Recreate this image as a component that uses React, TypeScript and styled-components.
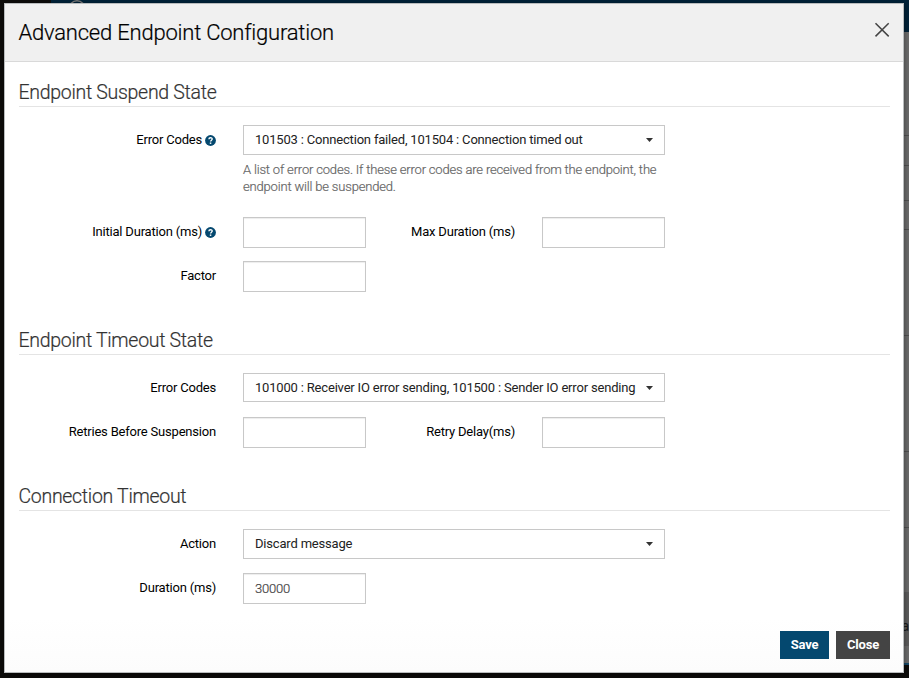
import React from "react";
import styled, { createGlobalStyle } from "styled-components";

const GlobalStyle = createGlobalStyle`
  *, *::before, *::after { box-sizing: border-box; }
  html, body { margin: 0; padding: 0; overflow: hidden; }
  body { font-family: Roboto, "Liberation Sans", sans-serif; font-size: 13px; color: #000; }
`;

const Page = styled.div`
  position: relative;
  width: 909px;
  height: 678px;
  overflow: hidden;
  display: flex;
  flex-direction: column;
  background: #0d0c0a;
`;

const TopBar = styled.div`
  display: flex;
  flex: none;
  height: 32px;
  padding-left: 17px;
  margin-left: 51px;
  background: #002238;
`;

const LogoRing = styled.svg`
  display: block;
  width: 18px;
  height: 18px;
`;

const PageBody = styled.div`
  display: flex;
  flex-direction: column;
  align-self: flex-end;
  width: 60px;
  height: 633px;
  background: #6c6c6c;
  border-bottom: 2px solid #164867;
`;

const Stripe = styled.div<{ $height: number }>`
  flex: none;
  height: ${(p) => p.$height}px;
  border-bottom: 1px solid #505050;
`;

const PageFooterRow = styled.div`
  display: flex;
  align-items: center;
  justify-content: flex-end;
  height: 54px;
  margin-top: 64px;
  padding-top: 13px;
  background: #5c5c5c;
  color: #191919;
  font-size: 14px;
`;

const Modal = styled.section`
  position: absolute;
  left: 4px;
  top: 3px;
  width: 900px;
  height: 670px;
  display: flex;
  flex-direction: column;
  border: 1px solid #b9bcbd;
  background: #fff;
  box-shadow: 0 2px 6px rgba(0, 0, 0, 0.45);
`;

const ModalHeader = styled.header`
  display: flex;
  justify-content: space-between;
  flex: none;
  height: 58px;
  padding: 0 13px;
  background: #f0f0f0;
  border-bottom: 1px solid #d9d9d9;
`;

const Title = styled.h1`
  margin: 0;
  padding-left: 0.5px;
  font-size: 22px;
  line-height: 57px;
  font-weight: 300;
  letter-spacing: -0.21px;
  -webkit-text-stroke: 0.2px #000;
  white-space: nowrap;
`;

const CloseIcon = styled.svg`
  width: 16px;
  height: 16px;
  margin-top: 18px;
`;

const ModalBody = styled.div`
  flex: 1;
  padding: 0 13px 0 14px;
`;

const Section = styled.section<{ $height: number }>`
  height: ${(p) => p.$height}px;
`;

const SectionTitle = styled.h2`
  margin: 0 0 18px;
  height: 45px;
  padding-top: 19px;
  border-bottom: 1px solid #e4e4e4;
  color: #333;
  font-size: 19.5px;
  line-height: 24px;
  font-weight: 300;
  letter-spacing: -0.3px;
  text-indent: -0.5px;
  -webkit-text-stroke: 0.2px #333;
  white-space: nowrap;
`;

const SelectLine = styled.div<{ $height?: number }>`
  display: grid;
  grid-template-columns: 197px 422px;
  column-gap: 27px;
  height: ${(p) => p.$height ?? 44}px;
`;

const InputLine = styled.div`
  display: grid;
  grid-template-columns: 197px 150px 149px 150px;
  height: 44px;
`;

const Label = styled.label`
  display: flex;
  justify-content: flex-end;
  align-items: center;
  gap: 3px;
  height: 28px;
  letter-spacing: -0.2px;
  white-space: nowrap;
`;

const InputCell = styled.div`
  padding-left: 27px;
`;

const Select = styled.div<{ $height?: number }>`
  display: flex;
  align-items: center;
  justify-content: space-between;
  height: ${(p) => p.$height ?? 30}px;
  padding: 0 11px;
  border: 1px solid #c8c8c8;
  background: #fff;
  color: #222;
  letter-spacing: -0.185px;
  white-space: nowrap;
`;

const SelectText = styled.span`
  line-height: 15px;
  padding-bottom: 1px;
`;

const Caret = styled.svg<{ $offset: number }>`
  flex: none;
  width: 7px;
  height: 4px;
  margin-top: ${(p) => p.$offset}px;
`;

const Input = styled.input`
  display: block;
  width: 123px;
  height: 31px;
  padding: 0 11px 1px;
  border: 1px solid #c8c8c8;
  border-radius: 0;
  outline: none;
  background: #fff;
  box-shadow: inset 0 1px 1px rgba(0, 0, 0, 0.075);
  color: #444;
  font: 300 13px Roboto, sans-serif;
  letter-spacing: -0.2px;
  -webkit-text-stroke: 0.2px #444;
`;

const Help = styled.p`
  margin: 6px 0 0;
  color: #666;
  font-weight: 300;
  line-height: 17px;
  letter-spacing: -0.175px;
  -webkit-text-stroke: 0.2px #666;
`;

const HelpMark = styled.svg`
  flex: none;
  width: 11px;
  height: 11px;
  margin-top: 2px;
`;

const ModalFooter = styled.footer`
  display: flex;
  justify-content: flex-end;
  gap: 7px;
  height: 55px;
  padding: 14px 13px 0;
  background: linear-gradient(#fff, #fcfcfc);
`;

const Button = styled.button<{ $primary?: boolean }>`
  width: ${(p) => (p.$primary ? 49 : 54)}px;
  height: 28px;
  padding: 0 0 2px;
  border: 0;
  background: ${(p) => (p.$primary ? "#04486f" : "#444")};
  color: #fff;
  font: 700 13px Roboto, sans-serif;
  letter-spacing: -0.2px;
`;

const HelpIcon = () => (
  <HelpMark viewBox="0 0 11 11">
    <circle cx="5.5" cy="5.5" r="5.4" fill="#04486f" />
    <path d="M3.9 4.2c0-2 3.3-2 3.3-.1 0 1.1-1.6 1.2-1.6 2.5" fill="none" stroke="#fff" strokeWidth="1.4" />
    <rect x="4.8" y="7.5" width="1.5" height="1.4" fill="#fff" />
  </HelpMark>
);

const SelectRow = ({ label, value, help, hint, height, boxHeight = 30 }: {
  label: string; value: string; help?: boolean; hint?: string; height?: number; boxHeight?: number;
}) => (
  <SelectLine $height={height}>
    <Label>{label}{help && <HelpIcon />}</Label>
    <div>
      <Select $height={boxHeight}>
        <SelectText>{value}</SelectText>
        <Caret $offset={boxHeight % 2} viewBox="0 0 7 4"><path d="M0 0h7L3.5 4z" fill="#333" /></Caret>
      </Select>
      {hint && <Help>{hint}</Help>}
    </div>
  </SelectLine>
);

const InputRow = ({ label, value = "", help, second }: {
  label: string; value?: string; help?: boolean; second?: string;
}) => (
  <InputLine>
    <Label>{label}{help && <HelpIcon />}</Label>
    <InputCell><Input defaultValue={value} /></InputCell>
    {second && (
      <>
        <Label>{second}</Label>
        <InputCell><Input /></InputCell>
      </>
    )}
  </InputLine>
);

const stripes = [104, 30, 35, 29, 106, 116, 76];

export default function App() {
  return (
    <Page>
      <GlobalStyle />
      <TopBar>
        <LogoRing viewBox="0 0 18 18"><circle cx="9" cy="9" r="8.2" fill="none" stroke="#777" strokeWidth="1.4" /></LogoRing>
      </TopBar>
      <PageBody>
        {stripes.map((h) => <Stripe key={h} $height={h} />)}
        <PageFooterRow>a</PageFooterRow>
      </PageBody>
      <Modal>
        <ModalHeader>
          <Title>Advanced Endpoint Configuration</Title>
          <CloseIcon viewBox="0 0 16 16"><path d="M1.5 1.2l13.2 13.2M14.7 1.2l-13.2 13.2" stroke="#444" strokeWidth="1.5" /></CloseIcon>
        </ModalHeader>
        <ModalBody>
          <Section $height={248}>
            <SectionTitle>Endpoint Suspend State</SectionTitle>
            <SelectRow
              label="Error Codes"
              help
              height={92}
              value="101503 : Connection failed, 101504 : Connection timed out"
              hint="A list of error codes. If these error codes are received from the endpoint, the endpoint will be suspended."
            />
            <InputRow label="Initial Duration (ms)" help second="Max Duration (ms)" />
            <InputRow label="Factor" />
          </Section>
          <Section $height={156}>
            <SectionTitle>Endpoint Timeout State</SectionTitle>
            <SelectRow label="Error Codes" boxHeight={29} value="101000 : Receiver IO error sending, 101500 : Sender IO error sending" />
            <InputRow label="Retries Before Suspension" second="Retry Delay(ms)" />
          </Section>
          <Section $height={150}>
            <SectionTitle>Connection Timeout</SectionTitle>
            <SelectRow label="Action" value="Discard message" />
            <InputRow label="Duration (ms)" value="30000" />
          </Section>
        </ModalBody>
        <ModalFooter>
          <Button $primary>Save</Button>
          <Button>Close</Button>
        </ModalFooter>
      </Modal>
    </Page>
  );
}
